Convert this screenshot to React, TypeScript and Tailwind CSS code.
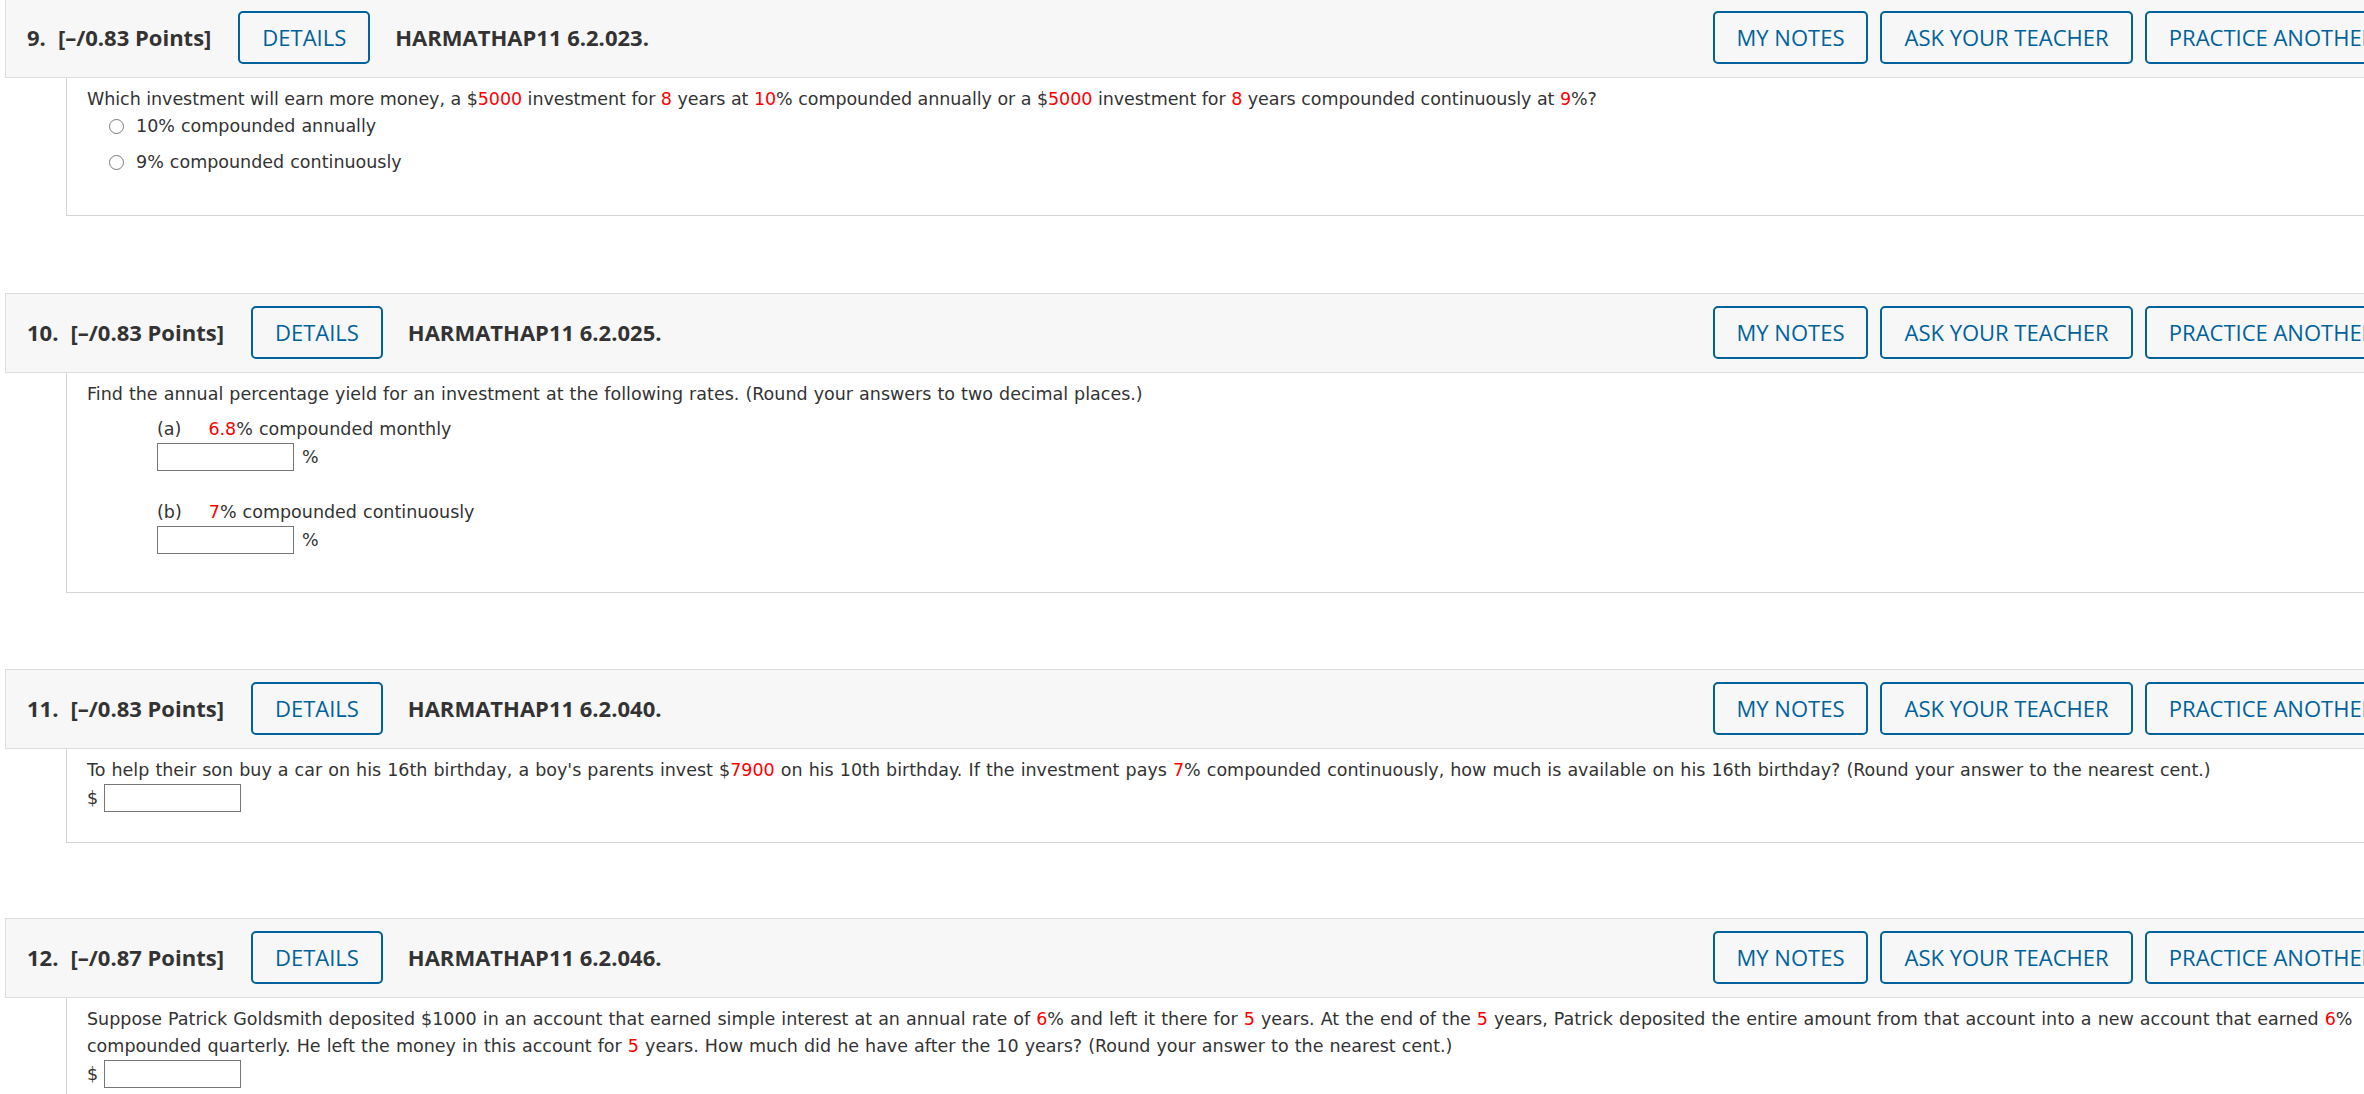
import React from "react";

const R = ({ children }: { children: React.ReactNode }) => (
  <span className="text-[#ff0000]">{children}</span>
);

function OutlineButton({ children, className = "" }: { children: React.ReactNode; className?: string }) {
  return (
    <div
      className={`flex h-[53px] shrink-0 items-center justify-center rounded-[5px] border-2 border-[#00629b] px-[22px] font-medium text-[#00629b] whitespace-nowrap ${className}`}
    >
      {children}
    </div>
  );
}

function QuestionHeader({ num, points, code }: { num: number; points: string; code: string }) {
  return (
    <div className="flex h-[80px] w-[2407px] items-center border border-[#dddddd] bg-[#f7f7f7] pb-[2px] pl-[21px] pr-[12px] font-['Open_Sans',sans-serif] text-[22px] text-[#333333]">
      <span className="font-bold whitespace-nowrap">
        <span className="mr-[12px]">{num}.</span>[–/{points} Points]
      </span>
      <OutlineButton className="ml-[27px]">DETAILS</OutlineButton>
      <span className="ml-[25px] font-bold whitespace-nowrap">HARMATHAP11 {code}.</span>
      <div className="ml-auto flex gap-[12px]">
        <OutlineButton className="w-[155px] px-0">MY NOTES</OutlineButton>
        <OutlineButton className="w-[253px] px-0">ASK YOUR TEACHER</OutlineButton>
        <OutlineButton className="w-[254px] px-0">PRACTICE ANOTHER</OutlineButton>
      </div>
    </div>
  );
}

function Answer({ prefix, suffix }: { prefix?: string; suffix?: string }) {
  return (
    <div className="flex h-[28px] items-center">
      {prefix && <span className="mr-[6px]">{prefix}</span>}
      <input
        type="text"
        readOnly
        className="h-[28px] w-[137px] border border-[#767676] bg-white outline-none"
      />
      {suffix && <span className="ml-[8px]">{suffix}</span>}
    </div>
  );
}

function Radio({ label }: { label: React.ReactNode }) {
  return (
    <div className="flex h-[27px] items-center pl-[22px]">
      <span className="h-[15px] w-[15px] shrink-0 rounded-full border border-[#7a7a7a] bg-white" />
      <span className="ml-[12px]">{label}</span>
    </div>
  );
}

// question body: Verdana-like text, left rule + bottom rule
function Body({ className, children }: { className: string; children: React.ReactNode }) {
  return (
    <div
      className={`ml-[61px] w-[2346px] border-b border-l border-[#d4d4d4] pl-[20px] pt-[8px] font-['DejaVu_Sans',Verdana,sans-serif] text-[17.5px] leading-[27px] text-[#333333] [word-spacing:0.5px] ${className}`}
    >
      {children}
    </div>
  );
}

export default function App() {
  return (
    <div className="h-[1094px] w-full overflow-hidden bg-white">
      <div className="-mt-[2px] pl-[5px]">
        {/* 9 */}
        <section className="mb-[77px]">
          <QuestionHeader num={9} points="0.83" code="6.2.023" />
          <Body className="h-[138px]">
            <p className="tracking-[-0.05px] [word-spacing:0px]">
              Which investment will earn more money, a $<R>5000</R> investment for <R>8</R> years at <R>10</R>%
              compounded annually or a $<R>5000</R> investment for <R>8</R> years compounded continuously at{" "}
              <R>9</R>%?
            </p>
            <Radio label="10% compounded annually" />
            <div className="mt-[9px]">
              <Radio label="9% compounded continuously" />
            </div>
          </Body>
        </section>

        {/* 10 */}
        <section className="mb-[76px]">
          <QuestionHeader num={10} points="0.83" code="6.2.025" />
          <Body className="h-[220px]">
            <p>
              Find the annual percentage yield for an investment at the following rates. (Round your answers to two
              decimal places.)
            </p>
            <div className="mt-[8px] pl-[70px]">
              <p>
                <span className="mr-[27px]">(a)</span>
                <R>6.8</R>% compounded monthly
              </p>
              <Answer suffix="%" />
              <p className="mt-[28px]">
                <span className="mr-[27px]">(b)</span>
                <R>7</R>% compounded continuously
              </p>
              <Answer suffix="%" />
            </div>
          </Body>
        </section>

        {/* 11 */}
        <section className="mb-[75px]">
          <QuestionHeader num={11} points="0.83" code="6.2.040" />
          <Body className="h-[94px]">
            <p>
              To help their son buy a car on his 16th birthday, a boy's parents invest $<R>7900</R> on his 10th
              birthday. If the investment pays <R>7</R>% compounded continuously, how much is available on his 16th
              birthday? (Round your answer to the nearest cent.)
            </p>
            <Answer prefix="$" />
          </Body>
        </section>

        {/* 12 */}
        <section>
          <QuestionHeader num={12} points="0.87" code="6.2.046" />
          <Body className="h-[140px]">
            <p className="whitespace-nowrap">
              Suppose Patrick Goldsmith deposited $1000 in an account that earned simple interest at an annual rate
              of <R>6</R>% and left it there for <R>5</R> years. At the end of the <R>5</R> years, Patrick deposited
              the entire amount from that account into a new account that earned <R>6</R>%
              <br />
              compounded quarterly. He left the money in this account for <R>5</R> years. How much did he have after
              the 10 years? (Round your answer to the nearest cent.)
            </p>
            <Answer prefix="$" />
          </Body>
        </section>
      </div>
    </div>
  );
}
